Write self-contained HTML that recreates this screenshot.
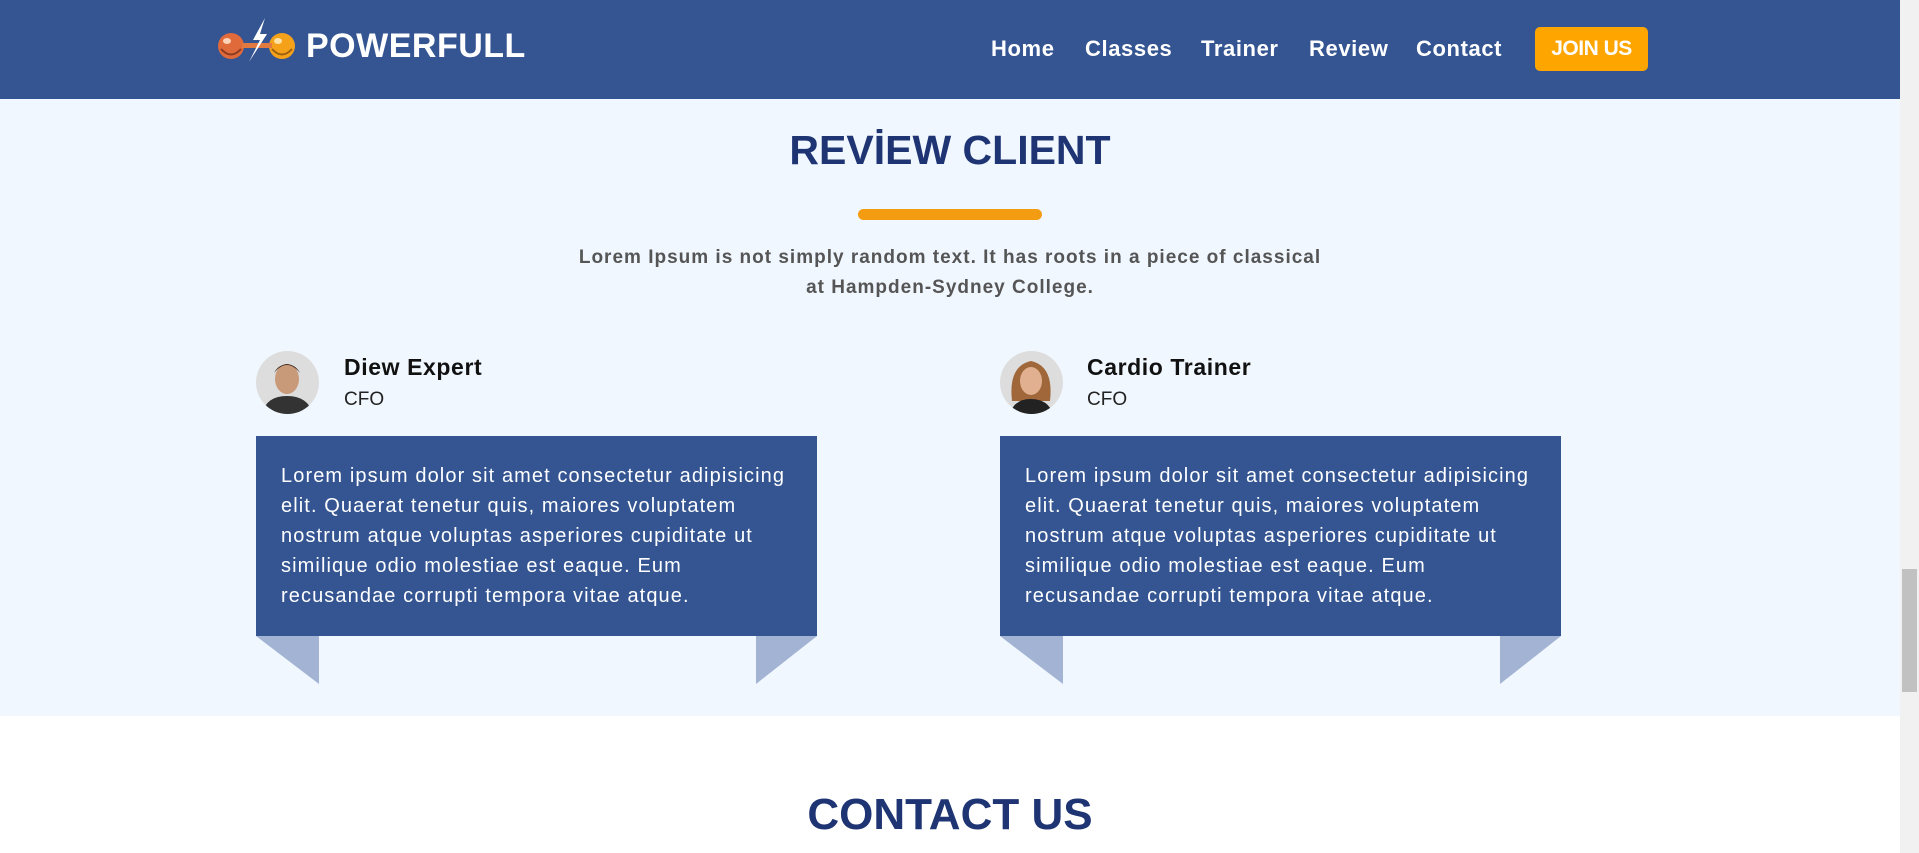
<!DOCTYPE html>
<html><head><meta charset="utf-8"><style>
*{margin:0;padding:0;box-sizing:border-box}
body{width:1919px;height:853px;overflow:hidden;font-family:"Liberation Sans",sans-serif;background:#fff;position:relative}
.hdr{position:absolute;left:0;top:0;width:1900px;height:99px;background:#345592}
.nav{position:absolute;top:36px;color:#fff;font-weight:bold;font-size:22px;letter-spacing:0.6px}
.btn{position:absolute;left:1535px;top:27px;width:113px;height:44px;background:#ffa500;border-radius:5px;color:#fff;font-weight:bold;font-size:21px;text-align:center;line-height:44px;letter-spacing:-0.5px}
.sec{position:absolute;left:0;top:99px;width:1900px;height:617px;background:#f0f7ff}
.title{position:absolute;left:0;width:1900px;text-align:center;font-weight:bold;color:#1e3473;font-size:41px}
.bar{position:absolute;left:858px;top:209px;width:184px;height:11px;background:#f39c12;border-radius:6px}
.sub{position:absolute;left:0;width:1900px;top:243px;text-align:center;color:#555;font-weight:bold;font-size:19px;line-height:30px;letter-spacing:1px}
.av{position:absolute;width:63px;height:63px;border-radius:50%;overflow:hidden;top:351px}
.name{position:absolute;top:354px;font-weight:bold;font-size:23px;color:#111;letter-spacing:0.6px}
.role{position:absolute;top:389px;font-size:19px;color:#222}
.box{position:absolute;top:436px;width:561px;height:200px;background:#345592;color:#fff;font-size:20px;line-height:30px;padding:25px 0 0 25px;letter-spacing:1.1px;white-space:nowrap}
.sb{position:absolute;right:0;top:0;width:19px;height:853px;background:#f1f1f1}
.th{position:absolute;right:2px;top:569px;width:15px;height:123px;background:#c1c1c1}
</style></head><body>
<div class="hdr">
<svg style="position:absolute;left:215px;top:16px" width="85" height="50" viewBox="0 0 85 50">
<circle cx="16" cy="30" r="13" fill="#e06a3a"/><circle cx="67" cy="30" r="13" fill="#f5a21a"/>
<rect x="27" y="27" width="30" height="5" fill="#e07a40"/>
<ellipse cx="12" cy="25" rx="4" ry="3" fill="#fbd3b8"/><ellipse cx="63" cy="25" rx="4" ry="3" fill="#fde3a8"/>
<path d="M6 33 Q16 44 26 33" stroke="#8a3a20" stroke-width="2" fill="none"/><path d="M57 33 Q67 44 77 33" stroke="#9a6010" stroke-width="2" fill="none"/>
<path d="M50 2 L38 24 L45 24 L34 46 L52 18 L45 18 Z" fill="#fff"/>
</svg>
<div style="position:absolute;left:306px;top:27px;color:#fff;font-weight:bold;font-size:34px;letter-spacing:0.5px">POWERFULL</div>
<div class="nav" style="left:991px">Home</div>
<div class="nav" style="left:1085px">Classes</div>
<div class="nav" style="left:1201px">Trainer</div>
<div class="nav" style="left:1309px">Review</div>
<div class="nav" style="left:1416px">Contact</div>
<div class="btn">JOIN US</div>
</div>
<div class="sec"></div>
<div class="title" style="top:127px">REVİEW CLIENT</div>
<div class="bar"></div>
<div class="sub">Lorem Ipsum is not simply random text. It has roots in a piece of classical<br>at Hampden-Sydney College.</div>

<div class="av" style="left:256px"><svg width="63" height="63"><rect width="63" height="63" fill="#ddd"/><ellipse cx="31" cy="28" rx="12" ry="15" fill="#c99a7a"/><path d="M18 22 Q31 6 44 22 Q40 14 31 13 Q22 14 18 22Z" fill="#3a2a20"/><path d="M6 63 Q10 45 31 45 Q52 45 57 63Z" fill="#333"/></svg></div>
<div class="name" style="left:344px">Diew Expert</div>
<div class="role" style="left:344px">CFO</div>
<div class="box" style="left:256px">Lorem ipsum dolor sit amet consectetur adipisicing<br>elit. Quaerat tenetur quis, maiores voluptatem<br>nostrum atque voluptas asperiores cupiditate ut<br>similique odio molestiae est eaque. Eum<br>recusandae corrupti tempora vitae atque.</div>
<svg style="position:absolute;left:256px;top:636px" width="561" height="49"><polygon points="0,0 63,0 63,48" fill="#a3b3d3"/><polygon points="500,0 561,0 500,48" fill="#a3b3d3"/></svg>

<div class="av" style="left:1000px"><svg width="63" height="63"><rect width="63" height="63" fill="#ddd"/><path d="M12 50 Q8 15 31 10 Q54 15 50 50Z" fill="#a0683a"/><ellipse cx="31" cy="30" rx="11" ry="14" fill="#e0b090"/><path d="M10 63 Q14 48 31 48 Q48 48 53 63Z" fill="#222"/></svg></div>
<div class="name" style="left:1087px">Cardio Trainer</div>
<div class="role" style="left:1087px">CFO</div>
<div class="box" style="left:1000px">Lorem ipsum dolor sit amet consectetur adipisicing<br>elit. Quaerat tenetur quis, maiores voluptatem<br>nostrum atque voluptas asperiores cupiditate ut<br>similique odio molestiae est eaque. Eum<br>recusandae corrupti tempora vitae atque.</div>
<svg style="position:absolute;left:1000px;top:636px" width="561" height="49"><polygon points="0,0 63,0 63,48" fill="#a3b3d3"/><polygon points="500,0 561,0 500,48" fill="#a3b3d3"/></svg>

<div class="title" style="top:790px;font-size:44px">CONTACT US</div>
<div class="sb"><div class="th"></div></div>
</body></html>
